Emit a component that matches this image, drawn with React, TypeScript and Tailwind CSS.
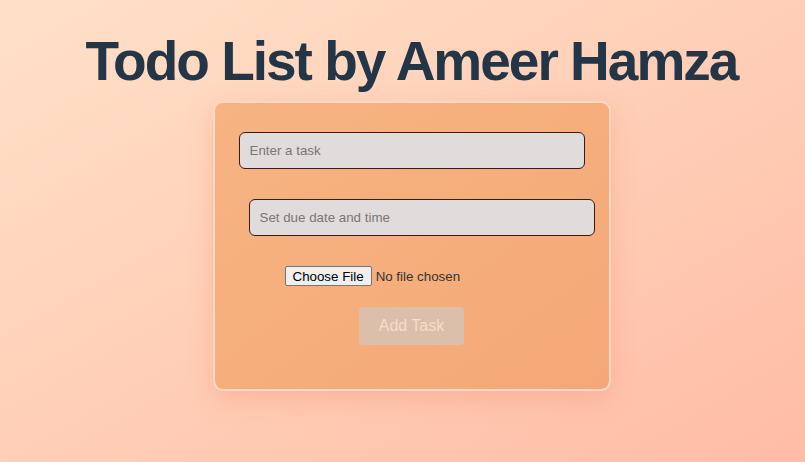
import React, { useState } from 'react';

export default function App() {
  const [task, setTask] = useState('');
  const [due, setDue] = useState('');

  return (
    <div
      className="min-h-[462px] w-full bg-gradient-to-br from-[#ffe1c8] to-[#ffbca6] pl-[18px] pt-[29px]"
      style={{ fontFamily: '"Liberation Sans", Arial, sans-serif' }}
    >
      <h1 className="text-center text-[55px] font-bold leading-[64px] tracking-[-2px] text-[#233648]">
        Todo List by Ameer Hamza
      </h1>

      <div className="mx-auto mt-[8px] h-[290px] w-[398px] rounded-[10px] border-2 border-[#ffd9c4] bg-gradient-to-br from-[#f6b482] to-[#f5a877] shadow-[0_8px_24px_rgba(240,140,110,0.35)]">
        <div className="flex flex-col pl-[24px] pt-[29px]">
          <input
            value={task}
            onChange={(e) => setTask(e.target.value)}
            placeholder="Enter a task"
            className="h-[37px] w-[346px] rounded-[6px] border border-[#3b1a1a] bg-[#e0dcdb] px-[10px] text-[13.33px] text-[#333] placeholder:text-[#7a7676] outline-none"
          />
          <input
            value={due}
            onChange={(e) => setDue(e.target.value)}
            placeholder="Set due date and time"
            className="ml-[10px] mt-[30px] h-[37px] w-[346px] rounded-[6px] border border-[#3b1a1a] bg-[#e0dcdb] px-[10px] text-[13.33px] text-[#333] placeholder:text-[#7a7676] outline-none"
          />
          <div className="ml-[46px] mt-[30px] flex items-center">
            <input
              type="file"
              className="text-[13.33px] text-[#333] file:mr-[4px] file:h-[20px] file:rounded-[2px] file:border file:border-solid file:border-[#767676] file:bg-[#efefef] file:px-[7px] file:text-[13.33px] file:text-black"
            />
          </div>
          <div className="mt-[20px] flex justify-center pr-[24px]">
            <button className="h-[38px] w-[105px] rounded-[4px] bg-[#dcbfab] text-[16px] text-[#f6dccb]">
              Add Task
            </button>
          </div>
        </div>
      </div>
    </div>
  );
}
